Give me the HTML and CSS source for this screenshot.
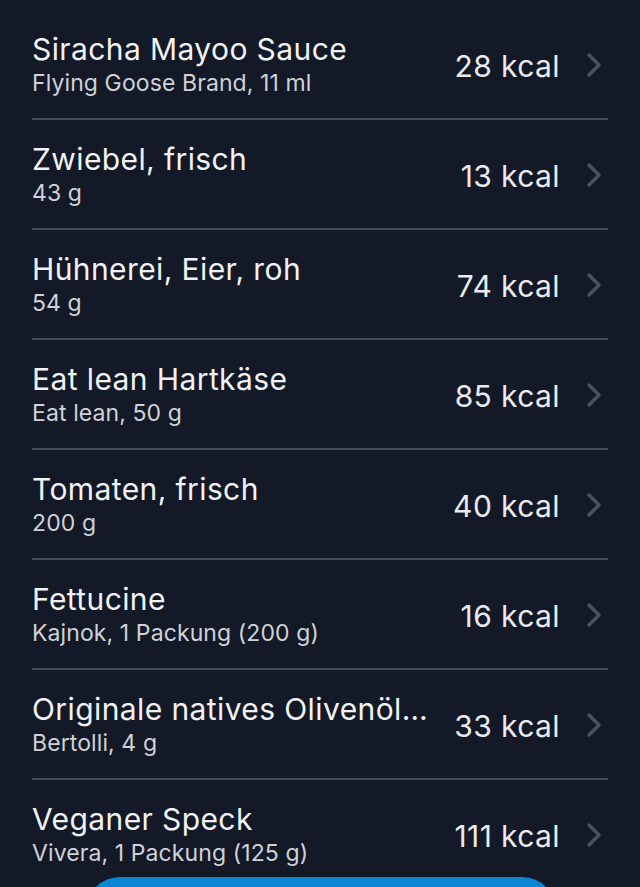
FILE: index.html
```html
<!DOCTYPE html>
<html lang="de">
<head>
<meta charset="utf-8">
<link rel="stylesheet" href="styles.css">
</head>
<body>
<div class="list">
  <div class="row"><div class="info"><div class="title">Siracha Mayoo Sauce</div><div class="sub">Flying Goose Brand, 11 ml</div></div><div class="kcal">28 kcal</div><svg class="chev" viewBox="0 0 16 26"><path d="M3 3 L13 13 L3 23"/></svg></div>
  <div class="row"><div class="info"><div class="title">Zwiebel, frisch</div><div class="sub">43 g</div></div><div class="kcal">13 kcal</div><svg class="chev" viewBox="0 0 16 26"><path d="M3 3 L13 13 L3 23"/></svg></div>
  <div class="row"><div class="info"><div class="title">Hühnerei, Eier, roh</div><div class="sub">54 g</div></div><div class="kcal">74 kcal</div><svg class="chev" viewBox="0 0 16 26"><path d="M3 3 L13 13 L3 23"/></svg></div>
  <div class="row"><div class="info"><div class="title">Eat lean Hartkäse</div><div class="sub">Eat lean, 50 g</div></div><div class="kcal">85 kcal</div><svg class="chev" viewBox="0 0 16 26"><path d="M3 3 L13 13 L3 23"/></svg></div>
  <div class="row"><div class="info"><div class="title">Tomaten, frisch</div><div class="sub">200 g</div></div><div class="kcal">40 kcal</div><svg class="chev" viewBox="0 0 16 26"><path d="M3 3 L13 13 L3 23"/></svg></div>
  <div class="row"><div class="info"><div class="title">Fettucine</div><div class="sub">Kajnok, 1 Packung (200 g)</div></div><div class="kcal">16 kcal</div><svg class="chev" viewBox="0 0 16 26"><path d="M3 3 L13 13 L3 23"/></svg></div>
  <div class="row"><div class="info"><div class="title">Originale natives Olivenöl…</div><div class="sub">Bertolli, 4 g</div></div><div class="kcal">33 kcal</div><svg class="chev" viewBox="0 0 16 26"><path d="M3 3 L13 13 L3 23"/></svg></div>
  <div class="row"><div class="info"><div class="title">Veganer Speck</div><div class="sub">Vivera, 1 Packung (125 g)</div></div><div class="kcal">111 kcal</div><svg class="chev" viewBox="0 0 16 26"><path d="M3 3 L13 13 L3 23"/></svg></div>
</div>
<div class="fab"></div>
</body>
</html>
```
FILE: styles.css
```css
html, body {
  margin: 0;
  padding: 0;
  background: #131926;
  height: 887px;
  overflow: hidden;
}
body {
  position: relative;
  font-family: Inter, Roboto, "Noto Sans", sans-serif;
}
.list {
  margin-top: 10px;
  padding: 0 32px;
}
.row {
  height: 108px;
  border-bottom: 2px solid #454a57;
  display: flex;
  align-items: center;
}
.info {
  flex: 1;
  min-width: 0;
  display: flex;
  flex-direction: column;
}
.title {
  color: #f1f2f4;
  font-size: 30px;
  letter-spacing: 0.4px;
  line-height: 35px;
  white-space: nowrap;
}
.sub {
  color: #cfd2d8;
  font-size: 23px;
  letter-spacing: 0.1px;
  line-height: 27px;
  margin-top: 3px;
}
.kcal {
  color: #e9ebef;
  font-size: 30px;
  letter-spacing: 0.4px;
  margin-right: 26px;
  margin-top: 3px;
}
.chev {
  width: 16px;
  height: 26px;
  margin-right: 6px;
  margin-top: 2px;
}
.chev path {
  fill: none;
  stroke: #4c5161;
  stroke-width: 3.5;
  stroke-linecap: round;
  stroke-linejoin: round;
}
.fab {
  position: absolute;
  left: 86px;
  right: 84px;
  top: 877px;
  height: 70px;
  border-radius: 34px;
  background: #0a86d4;
}
```
